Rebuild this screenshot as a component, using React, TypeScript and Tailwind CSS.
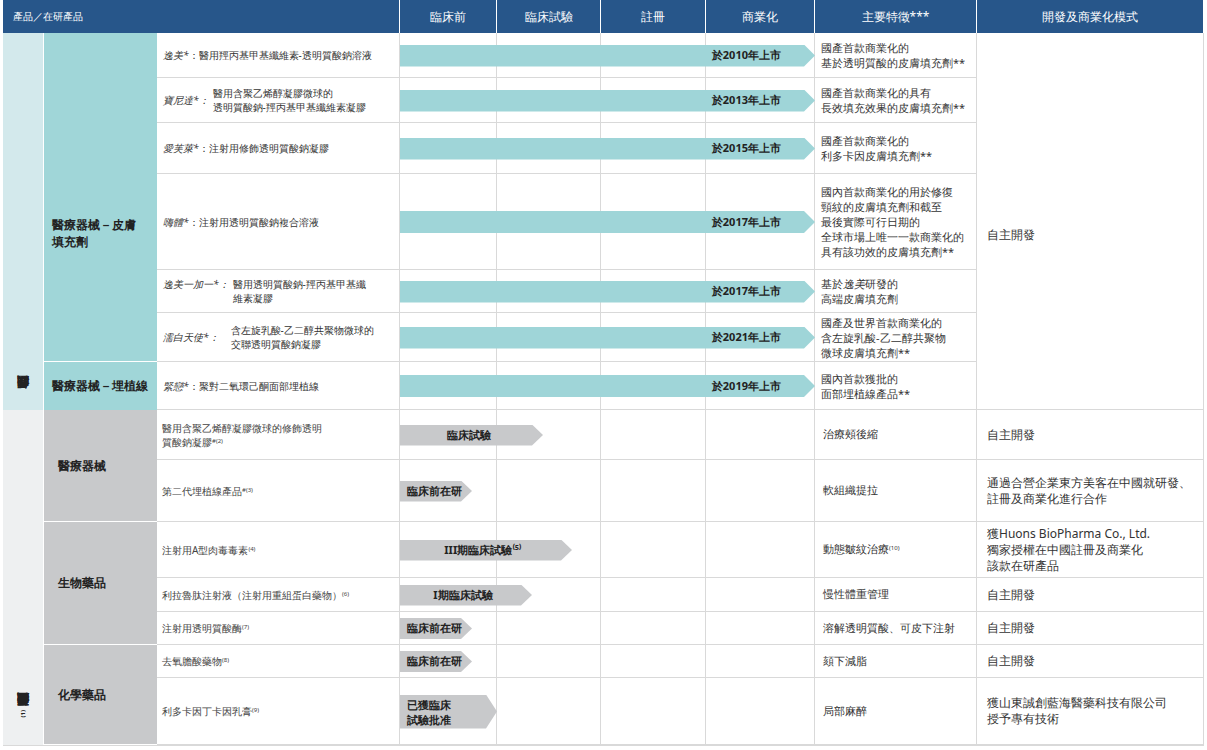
import React from "react";

const serif = "font-['Liberation_Serif','Noto_Sans_CJK_TC',serif]";
const sans = "font-['Noto_Sans_CJK_TC','Liberation_Sans',sans-serif]";

type Row = { name: React.ReactNode; bar: string; barW?: string; tall?: boolean; feat: React.ReactNode };

const upper: Row[] = [
  { name: <><i>逸美*</i>：醫用羥丙基甲基纖維素-透明質酸鈉溶液</>, bar: "於2010年上市", feat: <>國產首款商業化的<br />基於透明質酸的皮膚填充劑**</> },
  { name: <div className="flex"><i className="mr-1 self-center">寶尼達*：</i><span>醫用含聚乙烯醇凝膠微球的<br />透明質酸鈉-羥丙基甲基纖維素凝膠</span></div>, bar: "於2013年上市", feat: <>國產首款商業化的具有<br />長效填充效果的皮膚填充劑**</> },
  { name: <><i>愛芙萊*</i>：注射用修飾透明質酸鈉凝膠</>, bar: "於2015年上市", feat: <>國產首款商業化的<br />利多卡因皮膚填充劑**</> },
  { name: <><i>嗨體*</i>：注射用透明質酸鈉複合溶液</>, bar: "於2017年上市", feat: <>國內首款商業化的用於修復<br />頸紋的皮膚填充劑和截至<br />最後實際可行日期的<br />全球市場上唯一一款商業化的<br />具有該功效的皮膚填充劑**</> },
  { name: <div className="flex"><i className="mr-1">逸美一加一*：</i><span>醫用透明質酸鈉-羥丙基甲基纖<br />維素凝膠</span></div>, bar: "於2017年上市", feat: <>基於<i>逸美</i>研發的<br />高端皮膚填充劑</> },
  { name: <div className="flex"><i className="mr-3 self-center">濡白天使*：</i><span>含左旋乳酸-乙二醇共聚物微球的<br />交聯透明質酸鈉凝膠</span></div>, bar: "於2021年上市", feat: <>國產及世界首款商業化的<br />含左旋乳酸-乙二醇共聚物<br />微球皮膚填充劑**</> },
  { name: <><i>緊戀*</i>：聚對二氧環己酮面部埋植線</>, bar: "於2019年上市", feat: <>國內首款獲批的<br />面部埋植線產品**</> },
];

const lower: (Row & { dev?: React.ReactNode })[] = [
  { name: <>醫用含聚乙烯醇凝膠微球的修飾透明<br />質酸鈉凝膠<sup className="text-[6px]">#(2)</sup></>, bar: "臨床試驗", barW: "w-[143px]", feat: "治療頰後縮", dev: "自主開發" },
  { name: <>第二代埋植線產品<sup className="text-[6px]">#(3)</sup></>, bar: "臨床前在研", barW: "w-[72px]", feat: "軟組織提拉", dev: <>通過合營企業東方美客在中國就研發、<br />註冊及商業化進行合作</> },
  { name: <>注射用A型肉毒毒素<sup className="text-[6px]">(4)</sup></>, bar: "III期臨床試驗⁽⁵⁾", barW: "w-[172px]", feat: <>動態皺紋治療<sup className="text-[6px]">(10)</sup></>, dev: <>獲Huons BioPharma Co., Ltd.<br />獨家授權在中國註冊及商業化<br />該款在研產品</> },
  { name: <>利拉魯肽注射液（注射用重組蛋白藥物）<sup className="text-[6px]">(6)</sup></>, bar: "I期臨床試驗", barW: "w-[132px]", feat: "慢性體重管理", dev: "自主開發" },
  { name: <>注射用透明質酸酶<sup className="text-[6px]">(7)</sup></>, bar: "臨床前在研", barW: "w-[72px]", feat: "溶解透明質酸、可皮下注射", dev: "自主開發" },
  { name: <>去氧膽酸藥物<sup className="text-[6px]">(8)</sup></>, bar: "臨床前在研", barW: "w-[72px]", feat: "頦下減脂", dev: "自主開發" },
  { name: <>利多卡因丁卡因乳膏<sup className="text-[6px]">(9)</sup></>, bar: "已獲臨床試驗批准", barW: "w-[97px]", tall: true, feat: "局部麻醉", dev: <>獲山東誠創藍海醫藥科技有限公司<br />授予專有技術</> },
];

const rowStarts = [2, 3, 4, 5, 6, 7, 8];
const lowStarts = [9, 10, 11, 12, 13, 14, 15];
const cell = "border-b border-r border-[#d9d9d9] bg-white";
const arrow = "[clip-path:polygon(0_0,calc(100%-11px)_0,100%_50%,calc(100%-11px)_100%,0_100%)]";

function PipeCells({ row }: { row: number }) {
  return (
    <>
      {[4, 5, 6, 7].map((c) => (
        <div key={c} className={cell} style={{ gridRow: row, gridColumn: c }} />
      ))}
    </>
  );
}

function Vertical({ children }: { children: React.ReactNode }) {
  return (
    <div className={`shrink-0 whitespace-nowrap text-[12px] font-bold text-[#222] leading-[16px] ${sans}`} style={{ writingMode: "vertical-rl", transform: "rotate(180deg)" }}>
      {children}
    </div>
  );
}

export default function App() {
  return (
    <div className="w-[1207px] h-[750px] bg-white overflow-hidden">
      <div
        className={`ml-[3px] grid text-[#333] ${serif} border-b border-[#d9d9d9]`}
        style={{
          gridTemplateColumns: "41px 113px 243px 97px 104px 105px 109px 162px 227px",
          gridTemplateRows: "33px 45px 45px 51px 96px 43px 49px 48px 50px 62px 56px 34px 33px 33px 67px",
          width: 1201,
        }}
      >
        {/* header */}
        <div className={`col-span-3 bg-[#27568a] text-white text-[10px] flex items-center pl-[10px] border-r border-white ${sans}`}>產品／在研產品</div>
        {["臨床前", "臨床試驗", "註冊", "商業化", "主要特徵***", "開發及商業化模式"].map((h) => (
          <div key={h} className={`bg-[#27568a] text-white text-[12px] flex items-center justify-center border-r border-white ${sans}`}>{h}</div>
        ))}

        {/* section 1 */}
        <div className="bg-[#d3e9ec] border-r border-white flex flex-col items-center justify-end pb-[12px]" style={{ gridRow: "2 / 9", gridColumn: 1 }}>
          <Vertical>我們的產品</Vertical>
        </div>
        <div className={`bg-[#a0d6d8] border-b border-white flex items-center pl-[8px] pt-[72px] text-[12px] font-bold text-[#222] leading-[17px] ${sans}`} style={{ gridRow: "2 / 8", gridColumn: 2 }}>
          醫療器械－皮膚<br />填充劑
        </div>
        <div className={`bg-[#a0d6d8] flex items-center pl-[8px] text-[12px] font-bold text-[#222] ${sans}`} style={{ gridRow: 8, gridColumn: 2 }}>
          醫療器械－埋植線
        </div>
        {upper.map((r, i) => (
          <React.Fragment key={i}>
            <div className={`${cell} flex items-center pl-[6px] text-[10px] leading-[14px]`} style={{ gridRow: rowStarts[i], gridColumn: 3 }}>
              {r.name}
            </div>
            <PipeCells row={rowStarts[i]} />
            <div className={`${cell} flex items-center pl-[6px] text-[11px] leading-[15px]`} style={{ gridRow: rowStarts[i], gridColumn: 8 }}>
              <div>{r.feat}</div>
            </div>
            <div className="z-10 self-center h-[22px]" style={{ gridRow: rowStarts[i], gridColumn: "4 / 8" }}>
              <div className={`w-full h-[22px] bg-[#9fd5d8] ${arrow} flex items-center justify-end pr-[34px] text-[11px] font-bold text-[#222]`}>
                {r.bar}
              </div>
            </div>
          </React.Fragment>
        ))}
        <div className={`${cell} flex items-start pt-[193px] pl-[10px] text-[12px]`} style={{ gridRow: "2 / 9", gridColumn: 9 }}>
          自主開發
        </div>

        {/* section 2 */}
        <div className="bg-[#eef0f1] border-r border-white flex flex-col items-center justify-end pb-[30px]" style={{ gridRow: "9 / 16", gridColumn: 1 }}>
          <Vertical>我們的主要在研產品<sup className="text-[6px]">(1)</sup></Vertical>
        </div>
        {[
          ["醫療器械", "9 / 11"],
          ["生物藥品", "11 / 14"],
          ["化學藥品", "14 / 16"],
        ].map(([t, r]) => (
          <div key={t} className={`bg-[#c8c9cb] border-b border-white flex items-center pl-[14px] text-[12px] font-bold text-[#222] ${sans}`} style={{ gridRow: r, gridColumn: 2 }}>
            {t}
          </div>
        ))}
        {lower.map((r, i) => (
          <React.Fragment key={i}>
            <div className={`${cell} flex items-center pl-[5px] text-[10px] leading-[14px] text-[#444]`} style={{ gridRow: lowStarts[i], gridColumn: 3 }}>
              <div>{r.name}</div>
            </div>
            <PipeCells row={lowStarts[i]} />
            <div className={`${cell} flex items-center pl-[8px] text-[11px]`} style={{ gridRow: lowStarts[i], gridColumn: 8 }}>
              <div>{r.feat}</div>
            </div>
            <div className={`${cell} flex items-center pl-[10px] text-[12px] leading-[16px]`} style={{ gridRow: lowStarts[i], gridColumn: 9 }}>
              <div>{r.dev}</div>
            </div>
            <div className="z-10 self-center" style={{ gridRow: lowStarts[i], gridColumn: "4 / 8" }}>
              <div className={`${r.barW} ${r.tall ? "h-[34px] justify-start pl-[7px] leading-[15px]" : "h-[21px] justify-center pr-[6px]"} bg-[#c8c9cb] ${arrow} flex items-center text-[11px] font-bold text-[#222] ${r.tall || r.bar.startsWith("臨床前") ? `${sans} justify-start pl-[7px]` : ""}`}>
                {r.tall ? <span>已獲臨床<br />試驗批准</span> : r.bar}
              </div>
            </div>
          </React.Fragment>
        ))}
      </div>
    </div>
  );
}
